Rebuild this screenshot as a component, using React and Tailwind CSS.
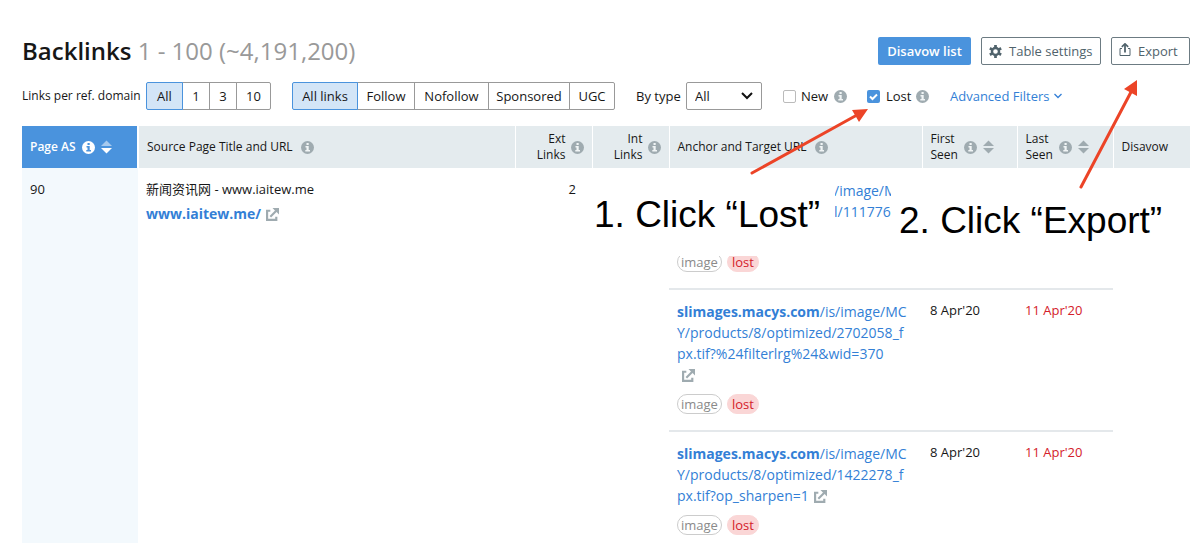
import React from "react";

function InfoIcon({ className = "text-[#9fabb0]", glyph = "#f1f5f6" }) {
  return (
    <svg viewBox="0 0 13 13" className={`h-[13px] w-[13px] shrink-0 ${className}`} aria-hidden="true">
      <circle cx="6.5" cy="6.5" r="6.5" fill="currentColor" />
      <path d="M5.500 2h2.200v2H5.500zM4.500 5h3.200v4H9v1.500H4.300V9h1.200V6.500h-1z" fill={glyph} />
    </svg>
  );
}

function SortIcon({ up = "#9fabb0", down = "#9fabb0" }) {
  return (
    <svg viewBox="0 0 11 14" className="h-[14px] w-[11px] shrink-0" aria-hidden="true">
      <path d="M5.5 0.5 11 6H0z" fill={up} />
      <path d="M5.5 13.5 11 8H0z" fill={down} />
    </svg>
  );
}

function ExternalIcon() {
  return (
    <svg viewBox="0 0 12 12" className="ml-[5px] inline h-[13px] w-[13px] align-[-2px]" fill="none" stroke="#9fabb0" aria-hidden="true">
      <path d="M4 2.5H1V11h8.5V8" strokeWidth="2" />
      <path d="M4 8 9.5 2.5" strokeWidth="2" />
      <path d="M6 0h6v6l-2-2-2-2z" fill="#9fabb0" stroke="none" />
    </svg>
  );
}

function GearIcon() {
  return (
    <svg viewBox="0 0 24 24" className="h-[13px] w-[13px]" aria-hidden="true">
      <circle cx="12" cy="12" r="6.500" fill="none" stroke="#50636c" strokeWidth="4.500" />
      <path
        d="M12 0v5M12 19v5M1.600 6l4.300 2.500M18.100 15.500l4.300 2.500M1.600 18l4.300-2.500M18.100 8.500 22.400 6"
        stroke="#50636c"
        strokeWidth="5"
      />
    </svg>
  );
}

function ExportIcon() {
  return (
    <svg viewBox="0 0 12 13" className="-mt-[3px] h-[13px] w-3" fill="none" stroke="#50636c" aria-hidden="true">
      <path d="M3 5.500H1v7h10v-7H9" />
      <path d="M6 9.500V2" strokeWidth="1.800" />
      <path d="M2.800 3.800 6 .8l3.200 3" strokeWidth="1.600" />
    </svg>
  );
}

const perDomain = [
  { name: "All", width: "w-[37px]", active: true },
  { name: "1", width: "w-[28px]" },
  { name: "3", width: "w-[28px]" },
  { name: "10", width: "w-[35px]" },
];

const linkTypes = [
  { name: "All links", width: "w-[66px]", active: true },
  { name: "Follow", width: "w-[58px]" },
  { name: "Nofollow", width: "w-[75px]" },
  { name: "Sponsored", width: "w-[82px]" },
  { name: "UGC", width: "w-[46px]" },
];

function ButtonGroup({ items, label }) {
  return (
    <div role="group" aria-label={label} className="flex">
      {items.map((item) => (
        <button
          key={item.name}
          type="button"
          className={`h-7 border text-center -ml-px first:ml-0 first:rounded-l-xs last:rounded-r-xs ${item.width} ${
            item.active ? "relative border-[#4a93dd] bg-[#d3e5f7]" : "border-[#999] bg-white"
          }`}
        >
          {item.name}
        </button>
      ))}
    </div>
  );
}

function Header() {
  return (
    <header className="flex items-center justify-between">
      <h1 className="text-[24px] leading-7 font-semibold text-[#171717]">
        Backlinks <span className="font-normal text-[#999]">1 - 100 (~4,191,200)</span>
      </h1>
      <div className="flex gap-[10px]">
        <button type="button" className="h-7 w-[93px] rounded-xs bg-[#4a93dd] font-semibold text-white">
          Disavow list
        </button>
        <button type="button" className="flex h-7 w-[120px] items-center gap-[7px] rounded-xs border border-[#6c7b82] pl-[7px] text-[#50636c]">
          <GearIcon />
          Table settings
        </button>
        <button type="button" className="flex h-7 w-[79px] items-center gap-[7px] rounded-xs border border-[#6c7b82] pl-[7px] text-[#50636c]">
          <ExportIcon />
          Export
        </button>
      </div>
    </header>
  );
}

function Filters() {
  return (
    <div className="mt-[17px] flex items-center whitespace-nowrap">
      <span className="w-[124px] text-[12px]">Links per ref. domain</span>
      <ButtonGroup items={perDomain} label="Links per ref. domain" />
      <div className="ml-[21px]">
        <ButtonGroup items={linkTypes} label="Link attribute" />
      </div>
      <label htmlFor="type" className="ml-[21px] w-[50px]">
        By type
      </label>
      <div className="relative">
        <select id="type" className="h-7 w-[76px] appearance-none rounded-xs border border-[#999] bg-white pl-2">
          <option>All</option>
        </select>
        <svg viewBox="0 0 12 8" className="pointer-events-none absolute top-[10px] right-[9px] h-2 w-3" fill="none" stroke="#111" strokeWidth="2" aria-hidden="true">
          <path d="m1 1 5 5 5-5" />
        </svg>
      </div>
      <label className="ml-[21px] flex w-[45px] items-center gap-[5px]">
        <input type="checkbox" className="h-[13px] w-[13px] shrink-0 appearance-none rounded-xs border border-[#bbb] bg-white" />
        New
      </label>
      <div className="ml-[6px]">
        <InfoIcon />
      </div>
      <label className="ml-[20px] flex w-[43px] items-center gap-[6px]">
        <span className="relative flex">
          <input type="checkbox" defaultChecked className="h-[13px] w-[13px] shrink-0 appearance-none rounded-xs bg-[#4a93dd]" />
          <svg viewBox="0 0 13 13" className="pointer-events-none absolute inset-0" fill="none" stroke="#fff" strokeWidth="2" aria-hidden="true">
            <path d="m3 6.500 2.500 2.500L10 4.500" />
          </svg>
        </span>
        Lost
      </label>
      <div className="ml-[6px]">
        <InfoIcon />
      </div>
      <a href="#filters" className="ml-[21px] flex items-center gap-1 text-[#337fd6]">
        Advanced Filters
        <svg viewBox="0 0 10 6" className="h-[6px] w-[10px]" fill="none" stroke="currentColor" strokeWidth="1.300" aria-hidden="true">
          <path d="m1.500 1 3.500 3.500L8.500 1" />
        </svg>
      </a>
    </div>
  );
}

function Tags() {
  return (
    <div className="mt-[9px] flex gap-[5px] text-[13px] leading-[18px]">
      <span className="rounded-full border border-[#ccc] px-[3px] text-[#8a8a8a]">image</span>
      <span className="rounded-full border border-[#fad6d6] bg-[#fad6d6] px-1 text-[#d4202a]">lost</span>
    </div>
  );
}

const targets = [
  { id: 1, lines: ["Y/products/8/optimized/2702058_f", "px.tif?%24filterlrg%24&wid=370", ""] },
  { id: 2, lines: ["Y/products/8/optimized/1422278_f", "px.tif?op_sharpen=1"] },
];

function TargetRow({ lines }) {
  return (
    <tr className="align-top">
      <td className="border-t-2 border-[#e4e8eb] pt-[11px] pb-4 pl-2">
        <div className="text-[14px] leading-[21px] whitespace-nowrap">
          <a href="#target" className="text-[#337fd6]">
            <b className="font-bold">slimages.macys.com</b>/is/image/MC
            {lines.map((line) => (
              <React.Fragment key={line}>
                <br />
                {line}
              </React.Fragment>
            ))}
          </a>
          <ExternalIcon />
        </div>
        <Tags />
      </td>
      <td className="border-t-2 border-[#e4e8eb] pt-[10px] pl-2">8 Apr'20</td>
      <td className="border-t-2 border-[#e4e8eb] pt-[10px] pl-2 text-[#d4202a]">11 Apr'20</td>
    </tr>
  );
}

function BacklinksTable() {
  return (
    <table className="mt-4 w-full table-fixed border-collapse">
      <colgroup>
        <col className="w-[116px]" />
        <col />
        <col className="w-[77px]" />
        <col className="w-[77px]" />
        <col className="w-[253px]" />
        <col className="w-[95px]" />
        <col className="w-[96px]" />
        <col className="w-[77px]" />
      </colgroup>
      <thead>
        <tr className="h-[42px] bg-[#e4ebee] text-left text-[12px] leading-4 [&>th]:font-normal">
          <th className="border-r-2 border-white bg-[#4a93dd] pl-2 text-white">
            <div className="flex items-center gap-[6px]">
              <span className="font-semibold">Page AS</span>
              <InfoIcon className="text-white" glyph="#4a93dd" />
              <SortIcon up="#a5c9ee" down="#fff" />
            </div>
          </th>
          <th className="border-r border-white pl-2">
            <div className="flex items-center gap-2">
              Source Page Title and URL
              <InfoIcon />
            </div>
          </th>
          <th className="border-r border-white pr-2">
            <div className="flex items-center justify-end gap-[5px] text-right">
              <span>
                Ext
                <br />
                Links
              </span>
              <InfoIcon />
            </div>
          </th>
          <th className="border-r border-white pr-2">
            <div className="flex items-center justify-end gap-[5px] text-right">
              <span>
                Int
                <br />
                Links
              </span>
              <InfoIcon />
            </div>
          </th>
          <th className="border-r border-white pl-2">
            <div className="flex items-center gap-2">
              Anchor and Target URL
              <InfoIcon />
            </div>
          </th>
          <th className="border-r border-white pl-2">
            <div className="flex items-center gap-[6px]">
              <span>
                First
                <br />
                Seen
              </span>
              <InfoIcon />
              <SortIcon />
            </div>
          </th>
          <th className="border-r border-white pl-2">
            <div className="flex items-center gap-[6px]">
              <span>
                Last
                <br />
                Seen
              </span>
              <InfoIcon />
              <SortIcon />
            </div>
          </th>
          <th className="pl-2">Disavow</th>
        </tr>
      </thead>
      <tbody>
        <tr className="align-top">
          <td rowSpan={3} className="bg-[#f3f9fd] pt-[11px] pl-2">
            90
          </td>
          <td rowSpan={3} className="pt-[11px] pl-2">
            <div>新闻资讯网 - www.iaitew.me</div>
            <div className="mt-1 text-[14px] leading-[21px]">
              <a href="#source" className="font-bold text-[#337fd6]">
                www.iaitew.me/
              </a>
              <ExternalIcon />
            </div>
          </td>
          <td rowSpan={3} className="pt-[11px] pr-4 text-right">
            2
          </td>
          <td rowSpan={3}></td>
          <td className="pt-3 pb-4 pl-2">
            <div className="h-[63px] pl-[157px] text-[14px] leading-[21px]">
              <a href="#target" className="text-[#337fd6]">
                /image/M
                <br />
                l/111776
              </a>
            </div>
            <Tags />
          </td>
          <td></td>
          <td></td>
          <td rowSpan={3}></td>
        </tr>
        {targets.map((target) => (
          <TargetRow key={target.id} lines={target.lines} />
        ))}
      </tbody>
    </table>
  );
}

function Annotations() {
  return (
    <div className="pointer-events-none absolute inset-0 font-['Liberation_Sans',Arial,sans-serif] text-[37px] leading-[42px] whitespace-nowrap text-black">
      <p className="absolute top-[172px] left-[594px] h-[84px] w-[241px] bg-white pt-[22px]">1. Click “Lost”</p>
      <p className="absolute top-[172px] left-[891px] h-[84px] w-[300px] bg-white pt-7 pl-[8px]">2. Click “Export”</p>
      <svg viewBox="0 0 1200 200" className="absolute top-0 left-0 h-[200px] w-[1200px]" fill="#ec4427" stroke="#ec4427" aria-hidden="true">
        <path d="M752 173 857 115M1081 187l50-95" strokeWidth="3" strokeLinecap="round" />
        <path d="m868 109-9 13-7-12zM1137 80v16l-13-7z" strokeWidth="0" />
      </svg>
    </div>
  );
}

export default function App() {
  return (
    <div className="relative h-screen overflow-hidden bg-white font-['Open_Sans','Noto_Sans_CJK_SC',sans-serif] text-[13px] leading-5 text-[#171717]">
      <main className="pt-[37px] pr-[10px] pl-[22px]">
        <Header />
        <Filters />
        <BacklinksTable />
      </main>
      <Annotations />
    </div>
  );
}
